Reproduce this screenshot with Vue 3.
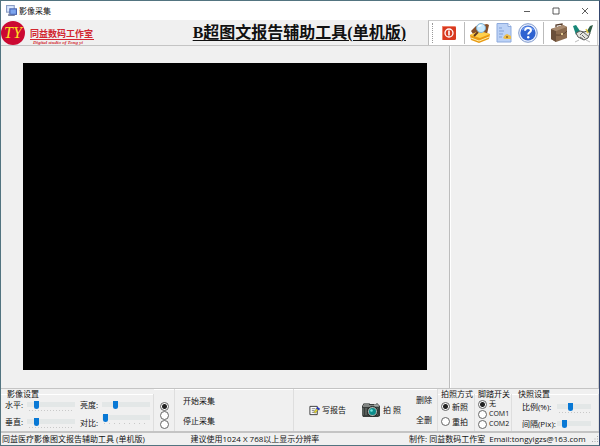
<script setup>
import { reactive, ref } from 'vue'

const image = reactive([
  { id: 'h', label: '水平:', value: 16, ticks: 'fine' },
  { id: 'l', label: '亮度:', value: 26, ticks: 'none' },
  { id: 'v', label: '垂直:', value: 16, ticks: 'fine' },
  { id: 'c', label: '对比:', value: 3, ticks: 'wide' },
])
const snap = reactive([
  { id: 'scale', label: '比例(%):', value: 38, ticks: 'fine' },
  { id: 'gap', label: '间隔(Pix):', value: 18, ticks: 'none' },
])
const source = ref(0)
const mode = ref('新照')
const pedal = ref('无')
</script>

<template>
  <div class="window">
    <header class="titlebar">
      <svg class="app-icon" viewBox="1 1 10 10" aria-hidden="true">
        <rect x="1" y="1" width="8" height="7" fill="#8a9dc4" />
        <rect x="2" y="2" width="6" height="5" fill="#dbe8ff" />
        <rect x="4" y="4" width="7" height="6" fill="#4661ad" />
        <rect x="5" y="5" width="5" height="4" fill="#7da5ee" />
        <path d="M3 9h2v1h4v1H3z" fill="#7c86a3" />
      </svg>
      <span class="caption">影像采集</span>
      <button class="win-btn" aria-label="最小化"><svg viewBox="0 0 8 8"><path d="M1 4.500h6" /></svg></button>
      <button class="win-btn" aria-label="最大化"><svg viewBox="0 0 8 8"><path d="M1 1h6v6h-6z" /></svg></button>
      <button class="win-btn" aria-label="关闭"><svg viewBox="0 0 8 8"><path d="M1 1l6 6M7 1l-6 6" /></svg></button>
    </header>

    <div class="banner">
      <div class="badge">TY</div>
      <div class="studio">
        <span class="studio-cn">同益数码工作室</span>
        <span class="studio-en">Digital studio of Tong yi</span>
      </div>
      <h1>B超图文报告辅助工具(单机版)</h1>
      <nav class="toolbar">
        <span class="grip"></span>
        <button class="tool" aria-label="退出">
          <svg viewBox="0 0 22 22">
            <rect x="4" y="4" width="14" height="14" rx="1.500" fill="#d83a20" />
            <path d="M4.500 17V4.500H17" fill="none" stroke="#ef8067" />
            <circle cx="11" cy="11" r="4" fill="none" stroke="#fff" stroke-width="1.300" />
            <path d="M11 8.500v5" stroke="#fff" stroke-width="1.600" />
          </svg>
        </button>
        <span class="rule"></span>
        <button class="tool" aria-label="查询">
          <svg viewBox="0 0 22 22">
            <path d="M2 9l5-5 11-2 2 1-2 9-12 3z" fill="#87502a" />
            <path d="M1 13l9-4 11 3-1 5-10 4-8-3z" fill="#e99b13" />
            <path d="M1 13l9-4 11 3-10 4z" fill="#ffd04c" />
            <path d="M2 16l8 3 10-4" fill="none" stroke="#fff0b0" />
            <path d="M9 10l-4 4" stroke="#643b20" stroke-width="2" />
            <circle cx="12" cy="6" r="4.500" fill="#c8eaff" stroke="#82b2d3" />
            <path d="M9.500 5q1-2 3-1.500" fill="none" stroke="#fff" stroke-width="1.500" />
          </svg>
        </button>
        <button class="tool" aria-label="报告模板">
          <svg viewBox="0 0 22 22">
            <path d="M4 1.500h11l3 3V20H4z" fill="#bcd2f6" stroke="#8daadd" />
            <path d="M15 1.500v3h3" fill="#fff" stroke="#8daadd" />
            <path d="M6 6h3M6 9h5M6 12h4M6 15h3" stroke="#7f9fd6" />
            <path d="M10 16l2-3 2-1 4 2v3h-6z" fill="#edbd48" />
            <circle cx="14" cy="15" r="1" fill="#8c6425" />
          </svg>
        </button>
        <button class="tool help" aria-label="帮助">
          <svg viewBox="0 0 22 22">
            <circle cx="11" cy="11" r="9.300" fill="#e9f0ff" stroke="#8099ca" />
            <circle cx="11" cy="11" r="7.600" fill="#2e62d1" />
            <path d="M5 8q5-6 12 0" fill="none" stroke="#6e99ee" stroke-width="1.500" />
            <path d="M8 8.800q.2-3 3.200-2.900 2.800.2 2.800 2.400c0 2-2.800 2-2.800 4.200" fill="none" stroke="#fff" stroke-width="2" />
            <circle cx="11.200" cy="15.300" r="1.200" fill="#fff" />
          </svg>
        </button>
        <span class="rule"></span>
        <button class="tool" aria-label="病例">
          <svg viewBox="0 0 22 22">
            <path d="M8 5V3l6-1v2" fill="none" stroke="#563d2c" stroke-width="1.300" />
            <path d="M3 7l12-4 4 2v11L8 20l-5-3z" fill="#8a6a4e" />
            <path d="M3 7l5 2v11l-5-3z" fill="#6a4f3a" />
            <path d="M3 7l12-4 4 2-11 4z" fill="#a98b70" />
            <path d="M8 13q7 1 11-4" fill="none" stroke="#5d432f" />
            <path d="M13 11h2v2h-2z" fill="#e2ca91" />
          </svg>
        </button>
        <button class="tool" aria-label="关于">
          <svg viewBox="0 0 22 22">
            <path d="M1 4l3-1 4 6-4 4z" fill="#178778" />
            <path d="M21 3l-3 1-3 5 3 3z" fill="#315d46" />
            <path d="M4 11l4-2 4 1 3-1 3 2-2 5-4 2-6-3z" fill="#e4e4df" stroke="#555" />
            <path d="M8 13l3-3 5 4M8 15l3 2M10 13l3 3" fill="none" stroke="#666" />
            <path d="M14 7l2 4" stroke="#e4cc43" stroke-width="1.500" />
            <path d="M3 20l4-2M14 18l4 2" stroke="#bbb" />
          </svg>
        </button>
      </nav>
    </div>

    <main class="workspace">
      <section class="stage"><div class="video"></div></section>
      <aside class="thumbs"></aside>
    </main>

    <div class="controls">
      <fieldset class="group image-group">
        <legend>影像设置</legend>
        <div class="sliders">
          <div v-for="s in image" :key="s.id" class="slider" :class="s.ticks">
            <label :for="s.id">{{ s.label }}</label>
            <input :id="s.id" v-model="s.value" type="range" min="0" max="100" />
          </div>
        </div>
      </fieldset>
      <div class="group sources">
        <input v-for="n in 3" :key="n" v-model="source" type="radio" name="source" :value="n - 1" :aria-label="'通道 ' + n" />
      </div>
      <div class="group capture">
        <button>开始采集</button>
        <button>停止采集</button>
      </div>
      <div class="group actions">
        <button class="with-icon">
          <svg class="note" viewBox="0 0 12 12" aria-hidden="true">
            <path d="M1 1.500h8v9H1z" fill="#fff" stroke="#333" />
            <path d="M3 4h4M3 6h3M3 8h3" stroke="#888" />
            <path d="M5 8l4-5 2 1-4 5z" fill="#e8d928" stroke="#555" stroke-width=".5" />
            <path d="M9 2l3 2-1 2-3-2z" fill="#2438be" />
          </svg>
          写报告
        </button>
        <button class="with-icon">
          <svg class="camera" viewBox="0 0 20 16" aria-hidden="true">
            <path d="M1 4l2-3h5l1 1h6l1-1 3 3v10l-2 1H2l-1-2z" fill="#393d3b" />
            <path d="M2 4h16M3 2h5M13 3h4" stroke="#c9cdca" />
            <path d="M2 6v7M5 6v7M16 6v7" stroke="#777e79" />
            <circle cx="11.500" cy="9.500" r="5" fill="#a9b4b0" stroke="#202624" />
            <circle cx="11.500" cy="9.500" r="3.500" fill="#0c8d8b" />
            <circle cx="10.500" cy="8.500" r="1.300" fill="#75e5de" />
          </svg>
          拍 照
        </button>
        <div class="deletes">
          <button>删除</button>
          <button>全删</button>
        </div>
      </div>
      <fieldset class="group choices modes">
        <legend>拍照方式</legend>
        <label v-for="m in ['新照', '重拍']" :key="m"><input v-model="mode" type="radio" name="mode" :value="m" />{{ m }}</label>
      </fieldset>
      <fieldset class="group choices pedals">
        <legend>脚踏开关</legend>
        <label v-for="p in ['无', 'COM1', 'COM2']" :key="p"><input v-model="pedal" type="radio" name="pedal" :value="p" />{{ p }}</label>
      </fieldset>
      <fieldset class="group snap-group">
        <legend>快照设置</legend>
        <div class="sliders single">
          <div v-for="s in snap" :key="s.id" class="slider" :class="s.ticks">
            <label :for="s.id">{{ s.label }}</label>
            <input :id="s.id" v-model="s.value" type="range" min="0" max="100" />
          </div>
        </div>
      </fieldset>
    </div>

    <footer class="status">
      <span>同益医疗影像图文报告辅助工具 (单机版)</span>
      <span>建议使用1024 X 768以上显示分辨率</span>
      <span class="credit">制作: 同益数码工作室 <a href="mailto:tongyigzs@163.com">Email:tongyigzs@163.com</a></span>
      <svg class="sizer" viewBox="0 0 8 8" aria-hidden="true">
        <path d="M6 1h1v1H6zM6 3.500h1v1H6zM6 6h1v1H6zM3.500 3.500h1v1h-1zM3.500 6h1v1h-1zM1 6h1v1H1z" fill="#aaa" />
      </svg>
    </footer>
  </div>
</template>

<style>
body { margin: 0; }
</style>

<style scoped>
.window {
  box-sizing: border-box;
  min-height: 100vh;
  display: grid;
  grid-template-rows: 19px 26px 1fr 45px 12px;
  border: 1px solid #527480;
  border-right-color: #34466e;
  background: #f0f0f0;
  color: #111;
  font: 8px/10px "Open Sans", "Noto Sans CJK SC", sans-serif;
}
button {
  padding: 0;
  border: 0;
  background: none;
  color: inherit;
  font: inherit;
}
svg { display: block; }

.titlebar {
  display: flex;
  align-items: center;
  background: #fff;
  padding-left: 5px;
}
.app-icon { width: 11px; height: 11px; }
.caption { flex: 1; padding-left: 2px; }
.win-btn { width: 29px; height: 19px; display: grid; place-items: center; }
.win-btn svg { width: 8px; height: 8px; fill: none; stroke: #333; stroke-width: 0.8; }

.banner {
  display: flex;
  align-items: center;
  border-bottom: 1px solid #c4c4c4;
}
.badge {
  width: 24px;
  height: 24px;
  border-radius: 50%;
  background: #cc0932;
  color: #ffdf22;
  font: italic 16px/23px "Liberation Serif", serif;
  text-align: center;
}
.studio {
  width: 64px;
  padding: 9px 0 0 5px;
  display: flex;
  flex-direction: column;
  color: #d22630;
  white-space: nowrap;
}
.studio-cn { font-size: 9px; font-weight: bold; line-height: 10px; border-bottom: 1px solid #d22630; }
.studio-en { font: italic bold 5px/5px "Liberation Serif", serif; padding-left: 3px; }
h1 {
  flex: 1;
  margin: 0;
  padding-right: 22px;
  text-align: right;
  font: bold 16px/22px "Liberation Serif", "Noto Sans CJK SC", serif;
  text-decoration: underline;
  text-decoration-thickness: 1px;
  text-underline-offset: 2px;
  white-space: nowrap;
}
.toolbar {
  display: flex;
  align-items: center;
  align-self: stretch;
  margin-right: 1px;
  padding-right: 2px;
  background: #fff;
  border-left: 1px solid #bbb;
  border-top: 1px solid #ccc;
  border-right: 1px solid #ccc;
}
.grip { height: 20px; margin: 0 4px 0 3px; border-left: 1px dotted #999; }
.rule { height: 22px; margin: 0 3px; border-left: 1px solid #bbb; }
.tool { width: 24px; display: grid; place-items: center; }
.tool svg { width: 22px; height: 22px; }

.workspace { display: grid; grid-template-columns: 3fr 1fr; }
.stage { display: grid; padding: 17px 22px 18px; border-right: 1px solid #bdbdbd; }
.video { background: #000; }
.thumbs { border-left: 1px solid #fff; border-right: 1px solid #c8c8c8; }

.controls {
  display: grid;
  grid-template-columns: 153px 21px 119fr 144fr 37px 37px 87px;
  border-top: 1px solid #c4c4c4;
  border-bottom: 2px solid #c4c4c4;
}
.group {
  min-width: 0;
  margin: 0;
  padding: 0;
  border: 0;
  border-right: 1px solid #dedede;
  box-shadow: inset 0 1px #fff;
}
legend { padding: 0 0 0 6px; line-height: 10px; }
.sliders { display: grid; grid-template-columns: 75px 75px; row-gap: 5px; padding-left: 4px; }
.sliders.single { grid-template-columns: 1fr; padding: 2px 0 0 10px; }
.slider { display: flex; align-items: center; height: 12px; white-space: nowrap; }
.slider label { width: 22px; }
.single .slider label { width: 35px; }
input[type="range"] {
  appearance: none;
  width: 48px;
  height: 12px;
  margin: 0;
  background: linear-gradient(#e3e7e7, #e3e7e7) 0 3px / 100% 5px no-repeat;
}
.single input[type="range"] { width: 34px; }
.fine input[type="range"] {
  background:
    linear-gradient(#e3e7e7, #e3e7e7) 0 3px / 100% 5px no-repeat,
    repeating-linear-gradient(90deg, #c9c9c9 0 1px, transparent 1px 3px) 2px 11px / 44px 1px no-repeat;
}
.wide input[type="range"] {
  background:
    linear-gradient(#e3e7e7, #e3e7e7) 0 3px / 100% 5px no-repeat,
    repeating-linear-gradient(90deg, #c9c9c9 0 1px, transparent 1px 5px) 2px 11px / 44px 1px no-repeat;
}
.slider.wide { align-items: flex-end; }
.wide input[type="range"] { margin-bottom: 4px; }
input[type="range"]::-webkit-slider-thumb {
  appearance: none;
  width: 5px;
  height: 8px;
  background: #0878d5;
  border-radius: 0 0 3px 3px;
}
input[type="radio"] {
  appearance: none;
  box-sizing: border-box;
  flex: none;
  width: 9px;
  height: 9px;
  margin: 0;
  border: 1px solid #666;
  border-radius: 50%;
  background: #fff;
}
input[type="radio"]:checked { background: radial-gradient(circle, #222 0 2px, #fff 3px); }
.sources { display: flex; flex-direction: column; align-items: center; padding-top: 13px; }
.capture {
  display: flex;
  flex-direction: column;
  align-items: flex-start;
  gap: 10px;
  padding: 7px 0 0 8px;
}
.actions { display: flex; align-items: center; justify-content: flex-end; gap: 15px; padding-right: 5px; }
.with-icon { display: flex; align-items: center; gap: 2px; white-space: nowrap; }
.note { width: 11px; height: 11px; }
.camera { width: 20px; height: 16px; }
.deletes { display: flex; flex-direction: column; gap: 10px; }
.choices legend { padding-left: 3px; white-space: nowrap; }
.choices label { display: flex; align-items: center; gap: 2px; padding-left: 3px; white-space: nowrap; }
.modes label { height: 15px; }
.pedals label { font-size: 7px; }

.status {
  display: grid;
  grid-template-columns: 189fr 219fr 180px 10px;
  align-items: center;
  padding-left: 1px;
  line-height: 12px;
  white-space: nowrap;
}
.status a { padding-left: 2px; color: inherit; text-decoration: none; }
.sizer { width: 8px; height: 8px; justify-self: end; }
</style>
